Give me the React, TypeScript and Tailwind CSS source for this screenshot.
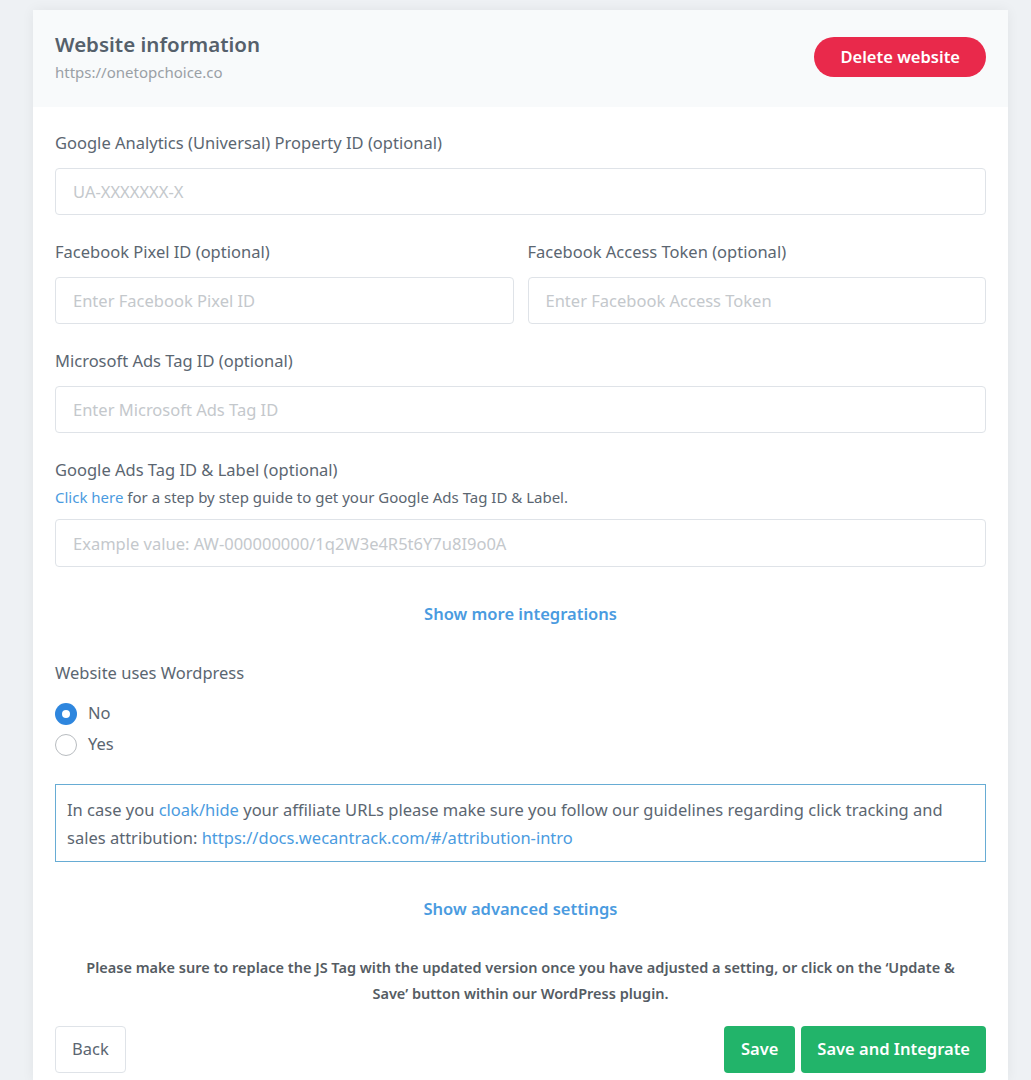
import React from "react";

const font = { fontFamily: '"Noto Sans", "Open Sans", sans-serif' };

function Field({ label, placeholder }: { label: string; placeholder: string }) {
  return (
    <div className="flex flex-col">
      <label className="text-[16.5px] leading-[24px] text-[#5b6671]">{label}</label>
      <input
        className="mt-[13px] h-[47px] w-full rounded-[4px] border border-[#dfe3e8] px-[17px] text-[16.5px] text-[#5b6671] placeholder:text-[#c4c8cc] outline-none"
        placeholder={placeholder}
      />
    </div>
  );
}

function Radio({ checked, label }: { checked: boolean; label: string }) {
  return (
    <div className="flex items-center gap-[11px] h-[31px]">
      {checked ? (
        <span className="flex h-[22px] w-[22px] items-center justify-center rounded-full bg-[#2e86de]">
          <span className="h-[8px] w-[8px] rounded-full bg-white" />
        </span>
      ) : (
        <span className="h-[22px] w-[22px] rounded-full border border-[#b8bcc0] bg-white" />
      )}
      <span className="text-[16.5px] text-[#5b6671]">{label}</span>
    </div>
  );
}

export default function App() {
  return (
    <div className="min-h-[1080px] bg-[#eef1f4] pt-[10px]" style={font}>
      <div className="ml-[33px] w-[975px] bg-white shadow-[0_0_12px_rgba(0,0,0,0.06)]">
        <div className="flex items-start justify-between bg-[#f8fafb] px-[22px] pt-[20px] pb-[25px]">
          <div className="flex flex-col">
            <h1 className="text-[20.5px] font-semibold leading-[28px] text-[#55606b]">Website information</h1>
            <span className="mt-[4px] text-[15px] leading-[20px] text-[#9aa0a6]">https://onetopchoice.co</span>
          </div>
          <button className="mt-[7px] h-[40px] rounded-full bg-[#e9294b] px-[26px] text-[16.5px] font-semibold text-white">
            Delete website
          </button>
        </div>

        <div className="flex flex-col px-[22px] pt-[24px] pb-[8px]">
          <Field label="Google Analytics (Universal) Property ID (optional)" placeholder="UA-XXXXXXX-X" />

          <div className="mt-[25px] grid grid-cols-2 gap-[14px]">
            <Field label="Facebook Pixel ID (optional)" placeholder="Enter Facebook Pixel ID" />
            <Field label="Facebook Access Token (optional)" placeholder="Enter Facebook Access Token" />
          </div>

          <div className="mt-[25px]">
            <Field label="Microsoft Ads Tag ID (optional)" placeholder="Enter Microsoft Ads Tag ID" />
          </div>

          <div className="mt-[25px] flex flex-col">
            <label className="text-[16.5px] leading-[24px] text-[#5b6671]">Google Ads Tag ID &amp; Label (optional)</label>
            <p className="mt-[5px] text-[15px] leading-[20px] text-[#5b6671]">
              <a className="text-[#4a9be0]">Click here</a> for a step by step guide to get your Google Ads Tag ID &amp; Label.
            </p>
            <input
              className="mt-[12px] h-[48px] w-full rounded-[4px] border border-[#dfe3e8] px-[17px] text-[16.5px] placeholder:text-[#c4c8cc] outline-none"
              placeholder="Example value: AW-000000000/1q2W3e4R5t6Y7u8I9o0A"
            />
          </div>

          <div className="mt-[35px] text-center text-[16.5px] font-semibold leading-[24px] text-[#4a9be0]">Show more integrations</div>

          <div className="mt-[35px] text-[16.5px] leading-[24px] text-[#5b6671]">Website uses Wordpress</div>
          <div className="mt-[13px] flex flex-col">
            <Radio checked label="No" />
            <Radio checked={false} label="Yes" />
          </div>

          <div className="mt-[24px] border border-[#67acd4] px-[11px] pt-[11px] pb-[9px] text-[16.5px] leading-[28px] text-[#5b6671]">
            In case you <a className="text-[#4a9be0]">cloak/hide</a> your affiliate URLs please make sure you follow our guidelines regarding click tracking and sales attribution:{" "}
            <a className="text-[#4a9be0]">https://docs.wecantrack.com/#/attribution-intro</a>
          </div>

          <div className="mt-[35px] text-center text-[16.5px] font-semibold leading-[24px] text-[#4a9be0]">Show advanced settings</div>

          <p className="mx-auto mt-[33px] max-w-[890px] text-center text-[14.5px] font-semibold leading-[26px] text-[#555c63]">
            Please make sure to replace the JS Tag with the updated version once you have adjusted a setting, or click on the ‘Update &amp; Save’ button within our WordPress plugin.
          </p>

          <div className="mt-[20px] flex items-center justify-between">
            <button className="h-[47px] rounded-[4px] border border-[#dfe3e8] bg-white px-[16px] text-[16.5px] text-[#5b6671]">Back</button>
            <div className="flex gap-[6px]">
              <button className="h-[47px] rounded-[4px] bg-[#22b46a] px-[17px] text-[16.5px] font-semibold text-white">Save</button>
              <button className="h-[47px] rounded-[4px] bg-[#22b46a] px-[16px] text-[16.5px] font-semibold text-white">Save and Integrate</button>
            </div>
          </div>
        </div>
      </div>
    </div>
  );
}
